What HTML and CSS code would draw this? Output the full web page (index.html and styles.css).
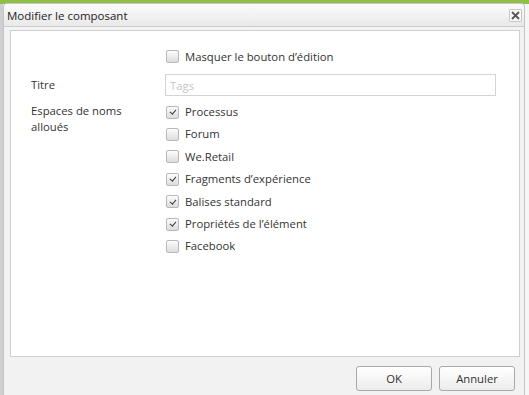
FILE: index.html
```html
<!DOCTYPE html>
<html lang="fr">
<head>
<meta charset="utf-8">
<title>Modifier le composant</title>
<link rel="stylesheet" href="styles.css">
</head>
<body>
<div class="backdrop">
  <div class="dialog">
    <div class="titlebar">
      <span class="title">Modifier le composant</span>
      <button class="close" aria-label="Fermer">
        <svg width="9" height="9" viewBox="0 0 9 9"><path d="M1 1L8 8M8 1L1 8" stroke="#555" stroke-width="1.8" fill="none"/></svg>
      </button>
    </div>
    <div class="body">
      <div class="panel">
        <div class="row">
          <div class="label"></div>
          <label class="check"><span class="box"></span>Masquer le bouton d’édition</label>
        </div>
        <div class="row row-input">
          <div class="label">Titre</div>
          <input class="text" type="text" placeholder="Tags">
        </div>
        <div class="row row-list">
          <div class="label label-multi">Espaces de noms alloués</div>
          <div class="list">
            <label class="check"><span class="box on"></span>Processus</label>
            <label class="check"><span class="box"></span>Forum</label>
            <label class="check"><span class="box"></span>We.Retail</label>
            <label class="check"><span class="box on"></span>Fragments d’expérience</label>
            <label class="check"><span class="box on"></span>Balises standard</label>
            <label class="check"><span class="box on"></span>Propriétés de l’élément</label>
            <label class="check"><span class="box"></span>Facebook</label>
          </div>
        </div>
      </div>
    </div>
    <div class="footer">
      <button class="btn">OK</button>
      <button class="btn">Annuler</button>
    </div>
  </div>
</div>
</body>
</html>
```
FILE: styles.css
```css
html, body {
  margin: 0;
  padding: 0;
  height: 100%;
  overflow: hidden;
}
body {
  background: #f4f4f4;
  font-family: "Open Sans", "DejaVu Sans", sans-serif;
  color: #333;
}
.backdrop {
  height: 100%;
  box-sizing: border-box;
  padding: 3px 4px 0 3px;
  background: linear-gradient(to bottom, #8fbf45 0, #8fbf45 4px, transparent 4px),
              linear-gradient(to right, #cfcfcf 0, #cfcfcf 3px, #f6f6f6 3px);
}
.dialog {
  height: 100%;
  box-sizing: border-box;
  display: flex;
  flex-direction: column;
  background: #f2f2f2;
  border: 1px solid #c4c4c4;
  border-bottom: none;
  border-radius: 4px 4px 0 0;
}
.titlebar {
  height: 22px;
  display: flex;
  align-items: center;
  justify-content: space-between;
  padding: 0 2px 0 3px;
  background: linear-gradient(to bottom, #fbfbfb, #e9e9e9);
  border-bottom: 1px solid #cdcdcd;
  border-radius: 4px 4px 0 0;
}
.title {
  font-size: 11.5px;
  color: #222;
}
.close {
  width: 13px;
  height: 13px;
  padding: 0;
  margin-top: 1px;
  display: flex;
  align-items: center;
  justify-content: center;
  background: #f7f7f7;
  border: 1px solid #c8c8c8;
  border-radius: 1px;
}
.body {
  padding: 3px 4px 0 6px;
  flex: 0 0 auto;
}
.panel {
  height: 327px;
  box-sizing: border-box;
  background: #fff;
  border: 1px solid #cfcfcf;
  padding: 14px 0 0 20px;
  font-size: 11.3px;
}
.row {
  display: grid;
  grid-template-columns: 134px 331px;
}
.row-input {
  margin-top: 7px;
  align-items: center;
}
.row-list {
  margin-top: 4px;
}
.label {
  line-height: 16px;
}
.label-multi {
  width: 100px;
  padding-top: 3px;
}
.check {
  height: 22.4px;
  display: flex;
  align-items: center;
  gap: 6px;
}
.box {
  width: 11px;
  height: 11px;
  margin-left: 1px;
  margin-top: 1px;
  border: 1px solid #b8b8b8;
  border-radius: 2px;
  background: linear-gradient(to bottom, #fdfdfd, #dcdcdc);
  position: relative;
  flex: 0 0 auto;
}
.box.on::after {
  content: "";
  position: absolute;
  left: 3.5px;
  top: 1.5px;
  width: 2.5px;
  height: 5px;
  border: solid #3a3a3a;
  border-width: 0 1.8px 1.8px 0;
  transform: rotate(40deg);
}
.text {
  height: 22px;
  box-sizing: border-box;
  margin: 0;
  border: 1px solid #d4d4d4;
  padding: 0 4px;
  font: inherit;
  font-size: 11.3px;
  color: #333;
}
.text::placeholder {
  color: #c4c4c4;
}
.footer {
  flex: 1;
  display: flex;
  justify-content: flex-end;
  align-items: flex-start;
  gap: 7px;
  padding: 9px 9px 0 0;
}
.btn {
  width: 76px;
  height: 25px;
  background: linear-gradient(to bottom, #ffffff, #ececec);
  border: 1px solid #a9a9a9;
  border-radius: 3px;
  font-family: "Open Sans", "DejaVu Sans", sans-serif;
  font-size: 11.3px;
  color: #333;
  padding: 0;
}
```
